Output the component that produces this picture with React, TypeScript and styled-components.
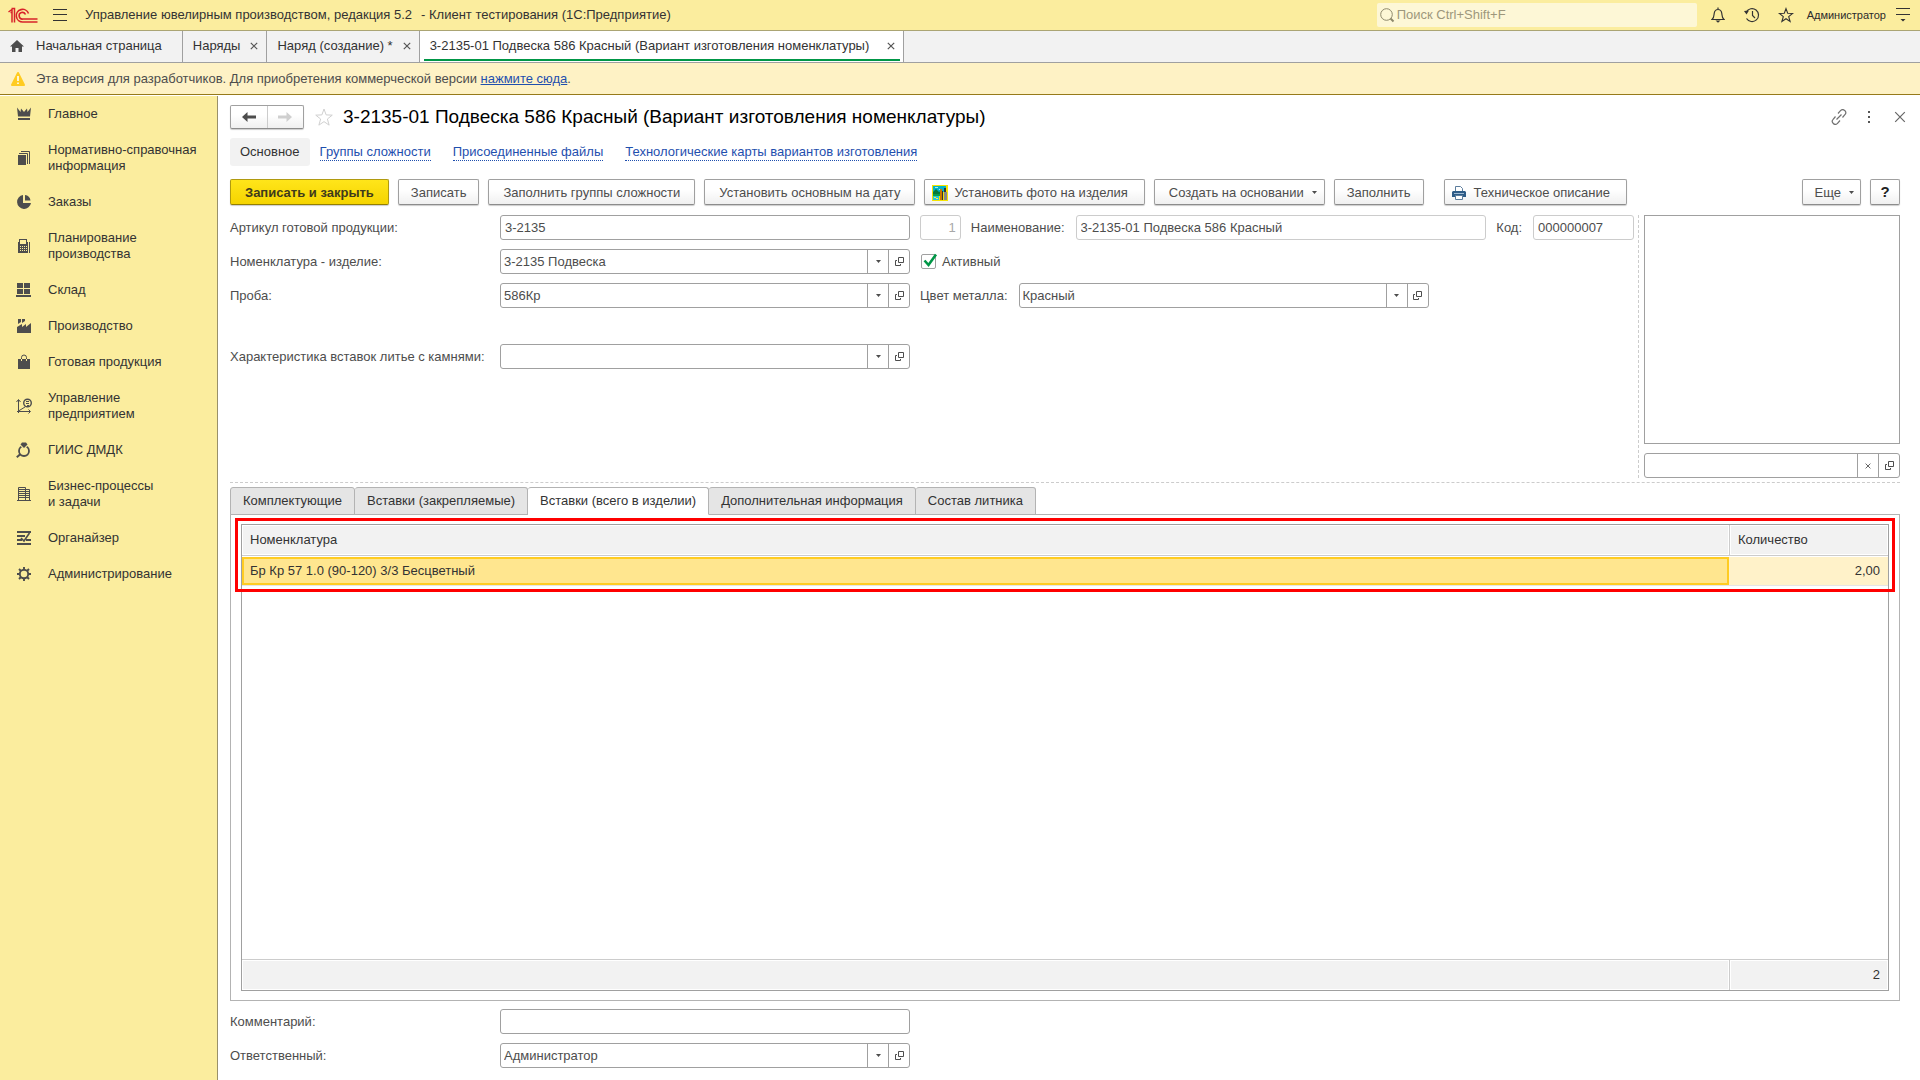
import React from "react";
import styled, { createGlobalStyle, css } from "styled-components";

const c = {
  yellow: "#fbed9e",
  notice: "#fef2c5",
  grey: "#f2f2f2",
  line: "#a0a0a0",
  soft: "#cccccc",
  text: "#333333",
  label: "#4d4d4d",
  link: "#1f4fae",
  icon: "#4d4d4d",
  green: "#009646",
};

const GlobalStyle = createGlobalStyle`
  *, *::before, *::after { box-sizing: border-box; }
  body { margin: 0; background: #fff; }
  body, button, input, select, table {
    font-family: "Liberation Sans", Arial, sans-serif;
    font-size: 13px;
    line-height: 16px;
    color: ${c.text};
  }
  button, input, select { margin: 0; padding: 0; border: 0; background: none; border-radius: 0; outline: none; }
  svg { display: block; flex: none; }
`;

const Page = styled.div`
  display: flex;
  flex-direction: column;
  min-height: 100vh;
`;

const TitleBar = styled.header`
  display: flex;
  align-items: center;
  height: 31px;
  padding: 0 4px 0 8px;
  background: ${c.yellow};
  border-bottom: 1px solid #aba574;
`;

const AppTitle = styled.div`
  flex: 1;
  display: flex;
  gap: 9px;
  padding-left: 3px;
  font-size: 13px;
  white-space: nowrap;
`;

const IconButton = styled.button<{ $w?: number }>`
  display: inline-flex;
  align-items: center;
  justify-content: center;
  width: ${(p) => p.$w ?? 34}px;
  height: 24px;
`;

const Search = styled.label`
  display: flex;
  align-items: center;
  flex: 0 1 320px;
  height: 24px;
  padding-left: 3px;
  margin-right: 4px;
  background: #fdf7d6;
  border-radius: 2px;
`;

const SearchInput = styled.input`
  flex: 1;
  min-width: 0;
  height: 24px;
  padding-left: 2px;
  padding-bottom: 2px;
  &::placeholder { color: #9d977c; opacity: 1; }
`;

const UserButton = styled.button`
  height: 24px;
  padding: 0 4px;
  font-size: 11px;
  color: #2b2b2b;
`;

const WindowTabs = styled.nav`
  display: flex;
  height: 32px;
  background: ${c.grey};
  border-bottom: 1px solid ${c.line};
`;

const WindowTab = styled.div<{ $active?: boolean }>`
  display: flex;
  align-items: center;
  flex: 0 1 ${(p) => (p.$active ? "484px" : "auto")};
  padding: 0 3px 0 4px;
  border-right: 1px solid ${c.line};
  background: ${(p) => (p.$active ? "#fff" : "transparent")};
`;

const TabInner = styled.div<{ $active?: boolean; $wide?: boolean }>`
  flex: 1;
  display: flex;
  align-items: center;
  justify-content: space-between;
  gap: 10px;
  height: 29px;
  padding: 1px ${(p) => (p.$wide ? 17 : 5)}px 0 6px;
  border-bottom: 2px solid ${(p) => (p.$active ? c.green : "transparent")};
`;

const TabTitle = styled.button`
  display: flex;
  align-items: center;
  gap: 12px;
  height: 24px;
  white-space: nowrap;
`;

const CloseButton = styled.button<{ $inset?: number }>`
  display: flex;
  align-items: center;
  height: 16px;
  padding-left: ${(p) => p.$inset ?? 0}px;
`;

const Notice = styled.div`
  display: flex;
  align-items: center;
  gap: 9px;
  height: 32px;
  padding: 0 9px;
  background: ${c.notice};
  border-bottom: 1px solid #967a1a;
  color: ${c.label};
  a { color: ${c.link}; text-decoration: underline; }
`;

const Body = styled.div`
  flex: 1;
  display: flex;
  padding-top: 1px;
`;

const Sidebar = styled.nav`
  flex: 0 0 218px;
  background: ${c.yellow};
  border-right: 1px solid #999069;
`;

const SideItem = styled.a`
  display: flex;
  align-items: center;
  gap: 16px;
  padding: 10px 8px 10px 16px;
  color: ${c.text};
  text-decoration: none;
  white-space: pre-line;
`;

const Main = styled.main`
  flex: 1;
  min-width: 0;
  display: flex;
  flex-direction: column;
  padding: 9px 20px 12px 12px;
`;

const Heading = styled.div`
  display: flex;
  align-items: center;
  height: 24px;
  margin-right: -6px;
`;

const raised = css`
  background: linear-gradient(#fff 40%, #f0f0f0);
  border: 1px solid ${c.line};
  border-bottom-color: #8c8c8c;
  border-radius: 2px;
  box-shadow: 0 1px 1px rgba(0, 0, 0, 0.2);
`;

const History = styled.div`
  ${raised}
  display: flex;
  width: 74px;
  height: 24px;
  button { flex: 1; display: flex; align-items: center; justify-content: center; }
  button + button { border-left: 1px solid ${c.soft}; }
`;

const Title = styled.h1`
  flex: 1;
  margin: 0;
  font-size: 19px;
  line-height: 24px;
  font-weight: 400;
  color: #000;
  white-space: nowrap;
`;

const SectionNav = styled.nav`
  display: flex;
  align-items: center;
  gap: 22px;
  height: 28px;
  margin-top: 9px;
  white-space: nowrap;
`;

const CurrentSection = styled.span`
  padding: 6px 10px;
  margin-right: -12px;
  border-radius: 3px;
  background: ${c.grey};
`;

const SectionLink = styled.a`
  color: ${c.link};
  line-height: 16px;
  text-decoration: none;
  border-bottom: 1px dotted ${c.link};
`;

const CommandBar = styled.div`
  display: flex;
  gap: 9px;
  margin-top: 13px;
`;

const Command = styled.button<{ $primary?: boolean; $long?: boolean; $icon?: boolean; $gap?: boolean }>`
  ${raised}
  display: flex;
  align-items: center;
  justify-content: center;
  gap: 6px;
  height: 26px;
  padding: 1px ${(p) => (p.$long ? 14 : 12)}px 0;
  color: ${c.label};
  white-space: nowrap;
  ${(p) => p.$icon && css`padding-left: 7px; padding-right: 16px;`}
  ${(p) => p.$gap && css`margin-left: 11px; gap: 8px;`}
  ${(p) => p.$primary && css`
    font-weight: 700;
    color: #3f3a1c;
    background: linear-gradient(#ffe51a, #f5d400);
    border-color: #b09a10;
    border-bottom-color: #947f00;
  `}
`;

const MenuCommand = styled(Command)`
  padding-right: ${(p) => (p.$long ? 7 : 6)}px;
  gap: 8px;
`;

const HelpCommand = styled(Command)`
  width: 30px;
  padding: 0;
  font-size: 15px;
  font-weight: 700;
  color: #222;
`;

const Spacer = styled.div`
  flex: 1;
`;

const Top = styled.div`
  display: flex;
  margin-top: 10px;
  padding-bottom: 4px;
  border-bottom: 1px dashed ${c.soft};
`;

const Fields = styled.div`
  flex: 1;
  min-width: 0;
  display: flex;
  flex-direction: column;
  gap: 9px;
  padding-right: 4px;
  border-right: 1px dashed ${c.soft};
`;

const Row = styled.div<{ $apart?: boolean }>`
  display: flex;
  align-items: center;
  gap: 10px;
  height: 25px;
  margin-top: ${(p) => (p.$apart ? 27 : 0)}px;
`;

const Label = styled.label<{ $lead?: boolean }>`
  flex: 0 0 ${(p) => (p.$lead ? "260px" : "auto")};
  padding-right: 1px;
  color: ${c.label};
  white-space: nowrap;
`;

const box = css`
  height: 25px;
  border: 1px solid ${c.line};
  border-radius: 3px;
  background: #fff;
`;

const TextField = styled.input<{ $w: number; $muted?: boolean }>`
  ${box}
  flex: 0 1 ${(p) => p.$w}px;
  width: ${(p) => p.$w}px;
  min-width: 0;
  padding: 0 4px;
  color: ${c.label};
  ${(p) => p.$muted && css`border-color: ${c.soft};`}
`;

const NumberField = styled(TextField)`
  text-align: right;
  color: #a8a8a8;
`;

const Combo = styled.div`
  ${box}
  flex: 0 1 410px;
  min-width: 0;
  display: grid;
  grid-template-columns: 1fr 21px 21px;
`;

const ComboSelect = styled.select`
  grid-area: 1 / 1 / 2 / 3;
  appearance: none;
  min-width: 0;
  padding: 0 24px 0 3px;
  color: ${c.label};
`;

const ComboInput = styled.input`
  min-width: 0;
  padding: 0 4px;
`;

const ComboMark = styled.span`
  grid-area: 1 / 2;
  display: flex;
  align-items: center;
  justify-content: center;
  border-left: 1px solid ${c.line};
  pointer-events: none;
`;

const ComboButton = styled.button`
  display: flex;
  align-items: center;
  justify-content: center;
  border-left: 1px solid ${c.line};
`;

const Check = styled.label`
  display: grid;
  grid-template-columns: 22px auto;
  align-items: center;
  color: ${c.label};
  svg { grid-area: 1 / 1; pointer-events: none; }
`;

const CheckBox = styled.input`
  grid-area: 1 / 1;
  appearance: none;
  width: 15px;
  height: 15px;
  margin-left: 1px;
  border: 1px solid ${c.line};
  border-radius: 2px;
`;

const PictureColumn = styled.div`
  flex: 0 0 261px;
  display: flex;
  flex-direction: column;
  gap: 9px;
  padding-left: 5px;
`;

const PictureFrame = styled.div`
  height: 229px;
  border: 1px solid ${c.line};
`;

const PictureCombo = styled(Combo)`
  flex: none;
`;

const FormTabs = styled.div`
  display: flex;
  margin-top: 4px;
  height: 28px;
  border-bottom: 1px solid #b3b3b3;
`;

const FormTab = styled.button<{ $active?: boolean }>`
  height: 28px;
  padding: 0 12px;
  border: 1px solid #b3b3b3;
  border-radius: 3px 3px 0 0;
  background: #e5e5e5;
  white-space: nowrap;
  & + & { border-left-width: 0; }
  ${(p) => p.$active && css`background: #fff; border-bottom-color: #fff;`}
`;

const TabPanel = styled.section`
  position: relative;
  flex: 1;
  display: flex;
  padding: 9px 10px;
  border: 1px solid #b3b3b3;
  border-top: 0;
`;

const Grid = styled.table`
  flex: 1;
  display: flex;
  flex-direction: column;
  border: 1px solid ${c.line};
  tbody { flex: 1; }
  tr { display: grid; grid-template-columns: 1fr 159px; }
  th, td { padding: 7px 8px; text-align: left; font-weight: 400; }
  thead tr, tfoot tr { height: 31px; }
  thead tr { border-bottom: 1px solid ${c.soft}; }
  tfoot tr { border-top: 1px solid ${c.soft}; }
  thead th, tfoot td { background: ${c.grey}; box-shadow: inset 0 0 0 1px #fff; }
  th + th, tfoot td + td { border-left: 1px solid ${c.soft}; }
  td + td { text-align: right; }
`;

const SelectedRow = styled.tr`
  height: 30px;
  padding: 1px 0;
  border-bottom: 1px solid #e5e5e5;
  td { padding: 6px 8px; background: #fff2c9; }
  td:first-child { padding: 4px 6px; background: #ffe68f; border: 2px solid #fc2; }
`;

const Highlight = styled.div`
  position: absolute;
  inset: 3px 4px auto 4px;
  height: 74px;
  border: 3px solid #f00;
  pointer-events: none;
`;

const Footer = styled.div`
  display: flex;
  flex-direction: column;
  gap: 9px;
  margin-top: 8px;
`;

/* ---------- icons ---------- */

const Logo = () => (
  <svg width="30" height="17" viewBox="0 0 30 17" fill="none" stroke="#d8232a">
    <path d="M0.500 5L4 2.500V15.500M4 5.500H2.500M6.500 15.500V1.500L3.500 1.500" strokeWidth="1.500" />
    <path d="M20.500 6.500A6.300 6.300 0 1 0 15 15H29.500" strokeWidth="1.600" />
    <path d="M17.500 7.500A3.300 3.300 0 1 0 15 12H29.500" strokeWidth="1.600" />
  </svg>
);

const Burger = () => (
  <svg width="14" height="12" viewBox="0 0 14 12" fill="#333">
    <path d="M0 0h14v1H0zM0 5h14v1H0zM0 11h14v1H0z" />
  </svg>
);

const CloseIcon = ({ size = 8, color = "#555" }) => (
  <svg width={size} height={size} viewBox="0 0 8 8" stroke={color} strokeWidth={size > 8 ? 0.8 : 1.2}>
    <path d="M.8.8l6.4 6.4M7.2.8L.8 7.2" />
  </svg>
);

const StarIcon = ({ size = 16, color = "#333", w = 1.1 }) => (
  <svg width={size} height={size} viewBox="0 0 16 16" fill="none" stroke={color} strokeWidth={w}>
    <path d="M8 1.6l1.7 4.7 4.9.2-3.9 3.1 1.4 4.9L8 11.7l-4.1 2.8 1.4-4.9L1.4 6.5l4.9-.2z" />
  </svg>
);

const Caret = () => (
  <svg width="5" height="3" viewBox="0 0 5 3" fill={c.icon}><path d="M0 0h5L2.5 3z" /></svg>
);

const OpenIcon = () => (
  <svg width="9" height="9" viewBox="0 0 9 9" fill="none" stroke={c.icon}>
    <path d="M3.5.5h5v5h-5zM2 3.5H.5v5h5V7" />
  </svg>
);

const Arrow = ({ color, flip }: { color: string; flip?: boolean }) => (
  <svg width="14" height="10" viewBox="0 0 14 10" fill={color}>
    <path d={flip ? "M14 5L8.500 0v3.500H0v3h8.500V10z" : "M0 5l5.500-5v3.500H14v3H5.500V10z"} />
  </svg>
);

const sideIcons: Record<string, React.ReactNode> = {
  crown: <path d="M1 1.500l3.500 4.500L5 2.500 8 6l3-3.500.500 3.500L15 1.500l-1 9H2zM2 12h12v2H2z" />,
  docs: (
    <>
      <path d="M2 5h8v10H2z" />
      <path d="M3 3.500h8.500V14M5 1.500h8.500V14" fill="none" stroke={c.icon} />
    </>
  ),
  pie: <path d="M7 1a7 7 0 1 0 8 8H7zM9 1v5.500h5.500A6.500 6.500 0 0 0 9 1z" />,
  calc: (
    <path
      fillRule="evenodd"
      d="M3 1h8v3h1v11H2V4h1zM4 2v4h6V2zM4 8v1h1V8zm2 0v1h1V8zm2 0v1h1V8zm2 0v1h1V8zM4 10v1h1v-1zm2 0v1h1v-1zm2 0v1h1v-1zm2 0v1h1v-1zM4 12v1h1v-1zm2 0v1h1v-1zm2 0v1h1v-1zm2 0v1h1v-1zM13 4h1v11h-1z"
    />
  ),
  stock: <path d="M1 1h6v5H1zM8 1h6v5H8zM1 7h6v5H1zM8 7h6v5H8zM0 13h15v2H0z" />,
  factory: <path d="M1 15V9l5-3v3l4-3v3l5-4v10zM2 1h3v3L2 6zM6 1h3v2L6 5z" />,
  bag: (
    <>
      <path d="M2 5h12v10H2z" />
      <path d="M5.500 5V3.500a2.500 2.500 0 0 1 5 0V5" fill="none" stroke={c.icon} />
      <path d="M5.500 5v2M10.500 5v2" stroke={c.yellow} />
    </>
  ),
  chart: (
    <>
      <path d="M2.500 15V2M.5 4l2-2.500 2 2.500M1 13.500h13M12.500 11.500l2 2-2 2M2.500 13L9 9" fill="none" stroke={c.icon} />
      <circle cx="11.500" cy="5" r="3.800" fill="none" stroke={c.icon} strokeWidth="1.400" />
      <path d="M10 3h3v1h-3zM10 5h3v1h-3zM11 7h2v1h-2z" />
    </>
  ),
  ring: (
    <>
      <circle cx="8" cy="9" r="5" fill="none" stroke={c.icon} strokeWidth="1.800" />
      <path d="M5 2.500L6.500.5h3L11 2.500 8 6z" stroke={c.yellow} strokeWidth="2.500" />
      <path d="M4.500 2.500L6 .5h4l1.500 2L8 6z" />
      <path d="M4.500 12L.8 15.200" stroke={c.icon} strokeWidth="2" />
    </>
  ),
  building: (
    <>
      <path d="M2.500 15V1.500h7V15M9.500 3.500h4V15M1 14.500h14" fill="none" stroke={c.icon} />
      <path d="M3 3h6v1H3zM3 5h6v1H3zM3 7h6v1H3zM3 9h6v1H3zM3 11h6v1H3zM10 5h4v1h-4zM10 7h4v1h-4zM10 9h4v1h-4zM10 11h4v1h-4z" />
    </>
  ),
  list: (
    <>
      <path d="M1 1h14v2H1zM1 5h8v2H1zM1 9h5v2H1zM1 13h14v2H1zM10 9h5v2h-5z" />
      <path d="M5 8l3 3 5.500-8" fill="none" stroke={c.icon} strokeWidth="1.600" />
    </>
  ),
  gear: (
    <>
      <circle cx="8" cy="8" r="4.200" fill="none" stroke={c.icon} strokeWidth="1.900" />
      <path
        d="M8 1v3M8 12v3M1 8h3M12 8h3M3 3l2 2M11 11l2 2M3 13l2-2M11 5l2-2"
        fill="none"
        stroke={c.icon}
        strokeWidth="1.900"
      />
    </>
  ),
};

const menu: [string, string][] = [
  ["crown", "Главное"],
  ["docs", "Нормативно-справочная\nинформация"],
  ["pie", "Заказы"],
  ["calc", "Планирование\nпроизводства"],
  ["stock", "Склад"],
  ["factory", "Производство"],
  ["bag", "Готовая продукция"],
  ["chart", "Управление\nпредприятием"],
  ["ring", "ГИИС ДМДК"],
  ["building", "Бизнес-процессы\nи задачи"],
  ["list", "Органайзер"],
  ["gear", "Администрирование"],
];

const PhotoIcon = () => (
  <svg width="16" height="16" viewBox="0 0 16 16">
    <path fill="#f5e400" d="M0 0h16v16H0z" />
    <path fill="#00b4c8" d="M1 1h13v6H1z" />
    <path fill="#a8ecf4" d="M3 2h3v1H3zM7 4h3v1H7z" />
    <path fill="#067a3a" d="M1 7l3-3 3 3 2-1v4H1z" />
    <path fill="#0c9e4a" d="M1 9h7v2H1z" />
    <path fill="#20c8dc" d="M1 11h6v4H1z" />
    <path fill="#fff04a" d="M2 12h2v1H2zM4 13h2v1H4z" />
    <path fill="#c97800" d="M8 4h2v11H8z" />
    <path fill="#333" d="M12 3h2v4h-2zM10 6h1v9h-1z" />
    <path fill="#888" d="M12 7h3v8h-3z" />
  </svg>
);

const PrinterIcon = () => (
  <svg width="14" height="14" viewBox="0 0 14 14">
    <path fill="#fff" stroke="#5c7d9c" d="M3.500.5h5l2 2v3h-7z" />
    <path fill="#2e5c87" d="M1 5h12l1 1v5H0V6z" />
    <path fill="#9dbad4" d="M2 7h10v1H2z" />
    <path fill="#fff" stroke="#5c7d9c" d="M3.500 9.500h7v4h-7z" />
  </svg>
);

/* ---------- parts ---------- */

function ComboField({ id, value }: { id: string; value: string }) {
  return (
    <Combo>
      <ComboSelect id={id} defaultValue={value}>
        <option>{value}</option>
      </ComboSelect>
      <ComboMark><Caret /></ComboMark>
      <ComboButton type="button" aria-label="Открыть"><OpenIcon /></ComboButton>
    </Combo>
  );
}

function OpenTab({ title, active }: { title: string; active?: boolean }) {
  return (
    <WindowTab $active={active}>
      <TabInner $active={active}>
        <TabTitle type="button">{title}</TabTitle>
        <CloseButton type="button" aria-label="Закрыть"><CloseIcon /></CloseButton>
      </TabInner>
    </WindowTab>
  );
}

const formTabs = [
  "Комплектующие",
  "Вставки (закрепляемые)",
  "Вставки (всего в изделии)",
  "Дополнительная информация",
  "Состав литника",
];

export default function App() {
  return (
    <Page>
      <GlobalStyle />
      <TitleBar>
        <Logo />
        <IconButton type="button" aria-label="Меню" $w={44}><Burger /></IconButton>
        <AppTitle>
          <span>Управление ювелирным производством, редакция 5.2</span>
          <span>- Клиент тестирования (1С:Предприятие)</span>
        </AppTitle>
        <Search>
          <svg width="15" height="15" viewBox="0 0 15 15" fill="none" stroke="#8d886b">
            <circle cx="6.500" cy="6.500" r="5.800" />
            <path d="M10.500 10.500l3 3" strokeWidth="2" />
          </svg>
          <SearchInput type="search" aria-label="Поиск" placeholder="Поиск Ctrl+Shift+F" />
        </Search>
        <IconButton type="button" aria-label="Уведомления">
          <svg width="14" height="16" viewBox="0 0 14 16" fill="none" stroke="#333">
            <path d="M7 .5v2M1 12.500c2-1.500 2-3.500 2.200-6C3.500 4 5 2.500 7 2.500S10.500 4 10.800 6.500c.2 2.500.2 4.500 2.200 6z" strokeWidth="1.200" />
            <path d="M4.500 13.500h5L7 15.800z" fill="#333" stroke="none" />
          </svg>
        </IconButton>
        <IconButton type="button" aria-label="История">
          <svg width="16" height="16" viewBox="0 0 16 16" fill="none" stroke="#333" strokeWidth="1.200">
            <path d="M2.300 5A6.500 6.500 0 1 1 2.500 11.500M8.500 4v4.500l2.500 2.500" />
            <path d="M0 4l5-.500-2.500 4z" fill="#333" stroke="none" />
          </svg>
        </IconButton>
        <IconButton type="button" aria-label="Избранное"><StarIcon /></IconButton>
        <UserButton type="button">Администратор</UserButton>
        <IconButton type="button" aria-label="Сервис" $w={26}>
          <svg width="14" height="14" viewBox="0 0 14 14" fill="#333">
            <path d="M0 0h14v1H0zM0 6h14v1H0zM4.500 11h5L7 13.500z" />
          </svg>
        </IconButton>
      </TitleBar>

      <WindowTabs>
        <WindowTab>
          <TabInner $wide>
            <TabTitle type="button">
              <svg width="14" height="14" viewBox="0 0 14 14" fill={c.icon}>
                <path d="M7 1L0 7.500h2V13h3.500V9h3v4H12V7.500h2z" />
              </svg>
              Начальная страница
            </TabTitle>
          </TabInner>
        </WindowTab>
        <OpenTab title="Наряды" />
        <OpenTab title="Наряд (создание) *" />
        <OpenTab title="3-2135-01 Подвеска 586 Красный (Вариант изготовления номенклатуры)" active />
      </WindowTabs>

      <Notice>
        <svg width="18" height="16" viewBox="0 0 18 16">
          <path d="M9 2l6 12H3z" fill="#fc2" stroke="#fc2" strokeWidth="2" strokeLinejoin="round" />
          <path d="M8.200 5h1.600v5H8.200zM8.200 11.500h1.600V13H8.200z" fill="#fff" />
        </svg>
        <span>
          Эта версия для разработчиков. Для приобретения коммерческой версии <a href="#buy">нажмите сюда</a>.
        </span>
      </Notice>

      <Body>
        <Sidebar>
          {menu.map(([icon, text]) => (
            <SideItem key={icon} href={`#${icon}`}>
              <svg width="16" height="16" viewBox="0 0 16 16" fill={c.icon}>{sideIcons[icon]}</svg>
              {text}
            </SideItem>
          ))}
        </Sidebar>

        <Main>
          <Heading>
            <History>
              <button type="button" aria-label="Назад"><Arrow color="#4d4d4d" /></button>
              <button type="button" aria-label="Вперед"><Arrow color="#cfcfcf" flip /></button>
            </History>
            <IconButton type="button" aria-label="В избранное" $w={39}>
              <StarIcon size={20} color="#d0d0d0" w={0.8} />
            </IconButton>
            <Title>3-2135-01 Подвеска 586 Красный (Вариант изготовления номенклатуры)</Title>
            <IconButton type="button" aria-label="Ссылка" $w={30}>
              <svg width="16" height="16" viewBox="0 0 16 16" fill="none" stroke="#707070" strokeWidth="1.200">
                <path d="M7 4.500l2.500-2.800a2.900 2.900 0 0 1 4.400 4L11.500 8.500M9 11.500l-2.500 2.800a2.900 2.900 0 0 1-4.400-4L4.500 7.500M5.500 10.500l5-5" />
              </svg>
            </IconButton>
            <IconButton type="button" aria-label="Действия" $w={30}>
              <svg width="2" height="12" viewBox="0 0 2 12" fill="#555">
                <path d="M0 0h2v2H0zM0 5h2v2H0zM0 10h2v2H0z" />
              </svg>
            </IconButton>
            <CloseButton type="button" aria-label="Закрыть форму" $inset={10}>
              <CloseIcon size={12} color="#666" />
            </CloseButton>
          </Heading>

          <SectionNav>
            <CurrentSection>Основное</CurrentSection>
            <SectionLink href="#groups">Группы сложности</SectionLink>
            <SectionLink href="#files">Присоединенные файлы</SectionLink>
            <SectionLink href="#cards">Технологические карты вариантов изготовления</SectionLink>
          </SectionNav>

          <CommandBar>
            <Command type="button" $primary $long>Записать и закрыть</Command>
            <Command type="button">Записать</Command>
            <Command type="button" $long>Заполнить группы сложности</Command>
            <Command type="button" $long>Установить основным на дату</Command>
            <Command type="button" $icon><PhotoIcon />Установить фото на изделия</Command>
            <MenuCommand type="button" $long>Создать на основании <Caret /></MenuCommand>
            <Command type="button">Заполнить</Command>
            <Command type="button" $icon $gap><PrinterIcon />Техническое описание</Command>
            <Spacer />
            <MenuCommand type="button">Еще <Caret /></MenuCommand>
            <HelpCommand type="button">?</HelpCommand>
          </CommandBar>

          <Top>
            <Fields>
              <Row>
                <Label $lead htmlFor="article">Артикул готовой продукции:</Label>
                <TextField id="article" $w={410} defaultValue="3-2135" />
                <NumberField $w={41} $muted aria-label="Номер варианта" readOnly defaultValue="1" />
                <Label htmlFor="name">Наименование:</Label>
                <TextField id="name" $w={411} $muted readOnly defaultValue="3-2135-01 Подвеска 586 Красный" />
                <Label htmlFor="code">Код:</Label>
                <TextField id="code" $w={101} $muted readOnly defaultValue="000000007" />
              </Row>
              <Row>
                <Label $lead htmlFor="item">Номенклатура - изделие:</Label>
                <ComboField id="item" value="3-2135 Подвеска" />
                <Check>
                  <CheckBox type="checkbox" defaultChecked />
                  <svg width="18" height="18" viewBox="0 0 18 18" fill="none" stroke={c.green} strokeWidth="2.600">
                    <path d="M4.500 7.500l4 4.500 7.500-10.500" />
                  </svg>
                  Активный
                </Check>
              </Row>
              <Row>
                <Label $lead htmlFor="probe">Проба:</Label>
                <ComboField id="probe" value="586Кр" />
                <Label htmlFor="color">Цвет металла:</Label>
                <ComboField id="color" value="Красный" />
              </Row>
              <Row $apart>
                <Label $lead htmlFor="inserts">Характеристика вставок литье с камнями:</Label>
                <ComboField id="inserts" value="" />
              </Row>
            </Fields>
            <PictureColumn>
              <PictureFrame />
              <PictureCombo>
                <ComboInput aria-label="Файл изображения" />
                <ComboButton type="button" aria-label="Очистить"><CloseIcon size={6} /></ComboButton>
                <ComboButton type="button" aria-label="Открыть"><OpenIcon /></ComboButton>
              </PictureCombo>
            </PictureColumn>
          </Top>

          <FormTabs role="tablist">
            {formTabs.map((t, i) => (
              <FormTab key={t} type="button" role="tab" aria-selected={i === 2} $active={i === 2}>{t}</FormTab>
            ))}
          </FormTabs>
          <TabPanel>
            <Grid>
              <thead>
                <tr><th>Номенклатура</th><th>Количество</th></tr>
              </thead>
              <tbody>
                <SelectedRow><td>Бр Кр 57 1.0 (90-120) 3/3 Бесцветный</td><td>2,00</td></SelectedRow>
              </tbody>
              <tfoot>
                <tr><td /><td>2</td></tr>
              </tfoot>
            </Grid>
            <Highlight />
          </TabPanel>

          <Footer>
            <Row>
              <Label $lead htmlFor="comment">Комментарий:</Label>
              <TextField id="comment" $w={410} />
            </Row>
            <Row>
              <Label $lead htmlFor="owner">Ответственный:</Label>
              <ComboField id="owner" value="Администратор" />
            </Row>
          </Footer>
        </Main>
      </Body>
    </Page>
  );
}
